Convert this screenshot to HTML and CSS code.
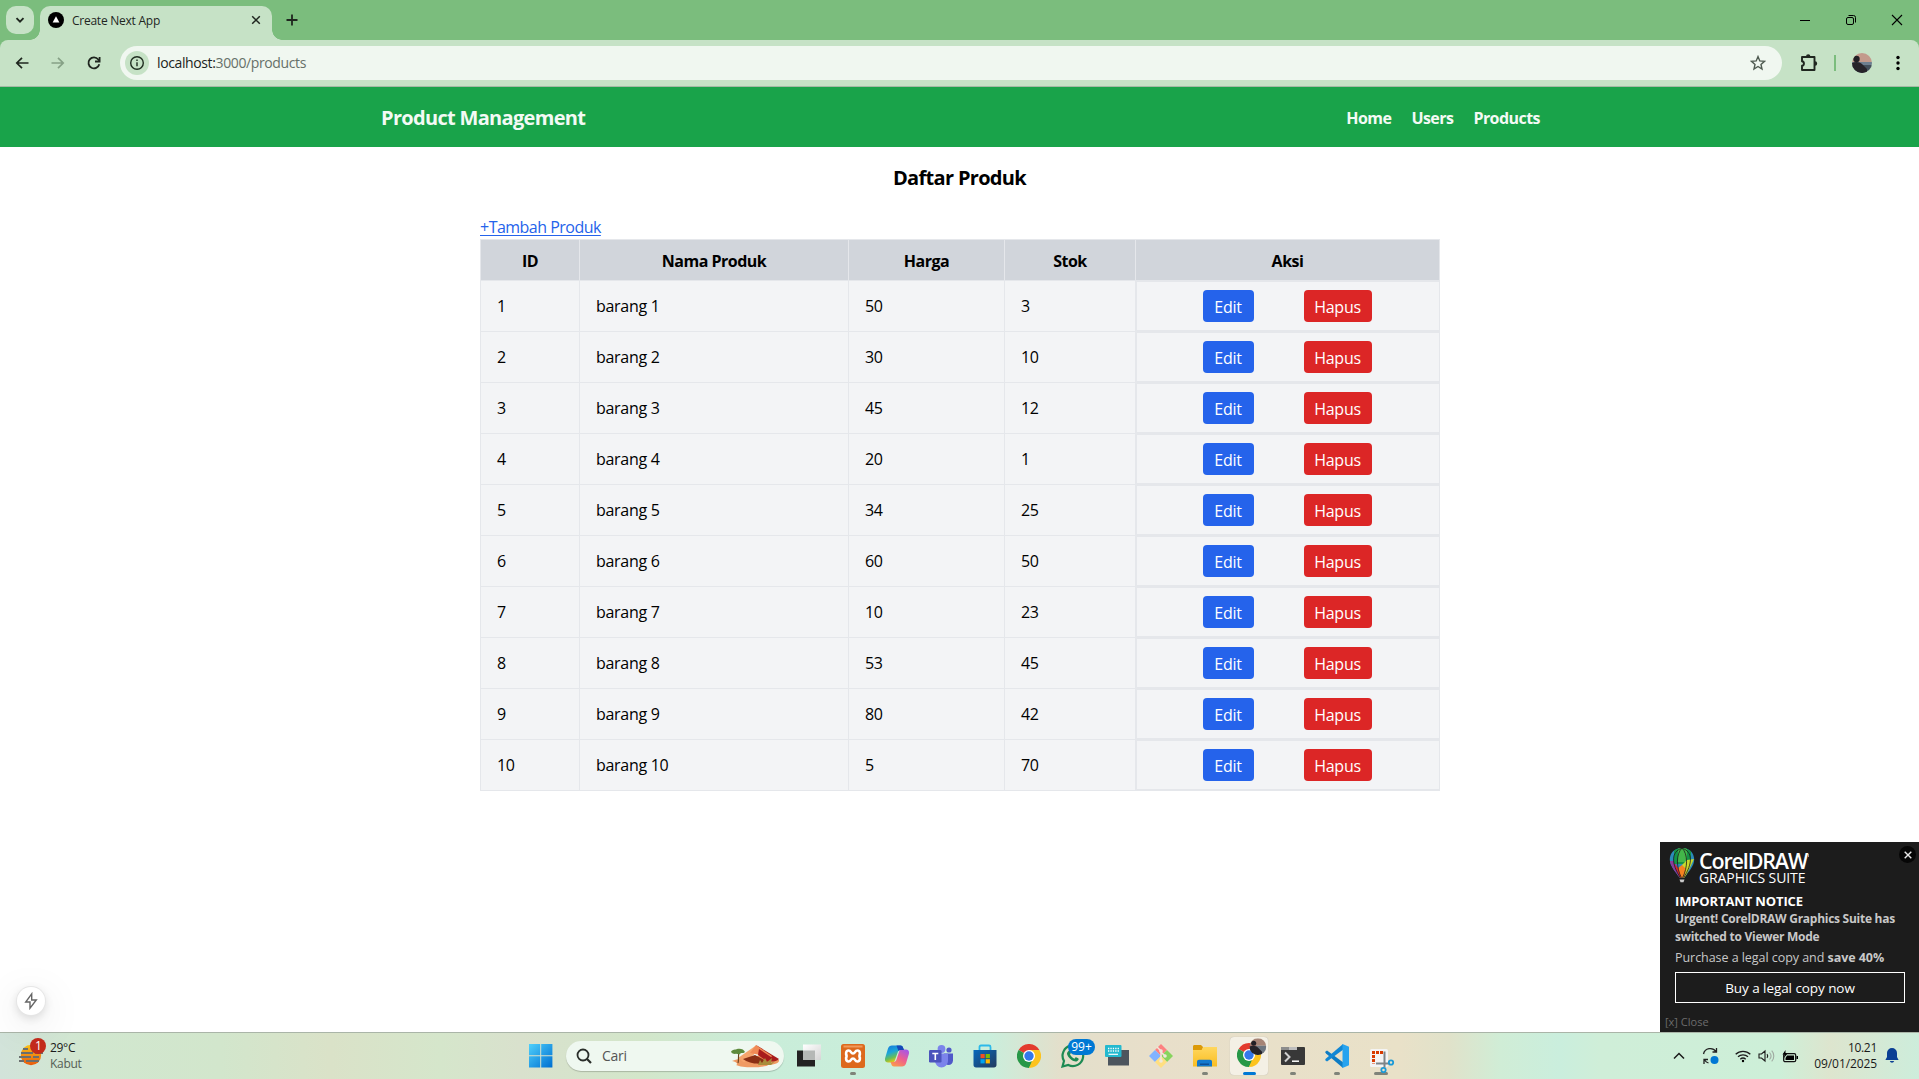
FILE: index.html
```html
<!DOCTYPE html>
<html lang="id">
<head>
<meta charset="utf-8">
<title>Create Next App</title>
<link rel="stylesheet" href="styles.css">
</head>
<body>
<header class="tabstrip">
  <button class="tabsearch"><svg width="12" height="12" viewBox="0 0 12 12"><path d="M2.500 4.200 6 7.700l3.500-3.500" fill="none" stroke="#1f261f" stroke-width="1.900"/></svg></button>
  <div class="tab">
    <svg class="favicon" width="16" height="16" viewBox="0 0 16 16"><circle cx="8" cy="8" r="8"/><path d="M8 4.200 11.400 10.600H4.600z" fill="#fff"/></svg>
    <span class="tabtitle">Create Next App</span>
    <svg width="10" height="10" viewBox="0 0 10 10"><path d="M1.200 1.200l7.600 7.600M8.800 1.200 1.200 8.800" stroke="#1f261f" stroke-width="1.500"/></svg>
  </div>
  <svg class="plus" width="12" height="12" viewBox="0 0 12 12"><path d="M6 .5v11M.5 6h11" stroke="#1f261f" stroke-width="1.800"/></svg>
  <div class="winbtns">
    <svg width="12" height="12" viewBox="0 0 12 12"><path d="M1 6.500h10" stroke="#000"/></svg>
    <svg width="12" height="12" viewBox="0 0 12 12" fill="none" stroke="#000"><rect x="1.500" y="3.500" width="7" height="7" rx="1.500"/><path d="M3.500 1.500h5a2 2 0 0 1 2 2v5"/></svg>
    <svg width="12" height="12" viewBox="0 0 12 12"><path d="M1 1l10 10M11 1 1 11" stroke="#000" stroke-width="1.100"/></svg>
  </div>
</header>
<div class="toolbar">
  <svg class="nv" width="16" height="16" viewBox="0 0 16 16" fill="none" stroke="#1f261f" stroke-width="1.700"><path d="M14.500 8H3M8 2.800 2.800 8 8 13.200"/></svg>
  <svg class="nv" width="16" height="16" viewBox="0 0 16 16" fill="none" stroke="#86a186" stroke-width="1.700"><path d="M1.500 8h12M8 2.800 13.200 8 8 13.200"/></svg>
  <svg class="nv" width="16" height="16" viewBox="0 0 16 16" fill="none" stroke="#1f261f" stroke-width="1.800"><path d="M13.300 9.300A5.500 5.500 0 1 1 12.300 4.500L13.500 6"/><path d="M13.600 2v4.500H9"/></svg>
  <div class="omnibox">
    <span class="info"><svg width="16" height="16" viewBox="0 0 16 16" fill="none" stroke="#1f2d20" stroke-width="1.400"><circle cx="8" cy="8" r="6.300"/><path d="M8 7.200v4M8 4.500v1.600"/></svg></span>
    <span class="url"><b>localhost:</b>3000/products</span>
    <svg width="16" height="16" viewBox="0 0 16 16" fill="none" stroke="#4e5a50" stroke-width="1.400"><path d="M8 1.600 9.800 5.900l4.700.4-3.500 3.100 1 4.600L8 11.500 4 14l1-4.600L1.500 6.300l4.700-.4z"/></svg>
  </div>
  <svg class="ext" width="18" height="20" viewBox="0 0 18 20"><path d="M2 4h12.500v13H2v-4.200c2.600-.4 2.600-4.200 0-4.600z" fill="none" stroke="#1f261f" stroke-width="1.900" stroke-linejoin="round"/><path d="M6 3.500a2.200 2.200 0 0 1 4.400 0zM15 8.300a2.200 2.200 0 0 1 0 4.400z" fill="#1f261f"/></svg>
  <i class="sep"></i>
  <svg class="avatar" width="20" height="20" viewBox="0 0 20 20"><defs><clipPath id="av"><circle cx="10" cy="10" r="10"/></clipPath></defs><g clip-path="url(#av)"><path fill="#c39a8c" d="M0 0h20v9H0z"/><path fill="#6e7f90" d="M0 9h20v3H0z"/><path fill="#44505c" d="M0 12h20v8H0z"/><circle cx="4.500" cy="6" r="3.200" fill="#211f25"/><path d="M0 10c4-2 8-1 10 1l5 5v4H0z" fill="#262329"/></g></svg>
  <svg class="dots" width="4" height="16" viewBox="0 0 4 16"><circle cx="2" cy="2.500" r="1.700"/><circle cx="2" cy="8" r="1.700"/><circle cx="2" cy="13.500" r="1.700"/></svg>
</div>
<main class="page">
  <nav class="navbar">
    <span class="brand">Product Management</span>
    <div class="links"><a>Home</a><a>Users</a><a>Products</a></div>
  </nav>
  <h1>Daftar Produk</h1>
  <section class="list">
    <a class="add">+Tambah Produk</a>
    <table>
      <colgroup><col class="c1"><col class="c2"><col class="c3"><col class="c4"><col class="c5"></colgroup>
      <thead><tr><th>ID</th><th>Nama Produk</th><th>Harga</th><th>Stok</th><th>Aksi</th></tr></thead>
      <tbody>
      <tr><td>1</td><td>barang 1</td><td>50</td><td>3</td><td class="act"><div><button class="edit">Edit</button><button class="del">Hapus</button></div></td></tr>
      <tr><td>2</td><td>barang 2</td><td>30</td><td>10</td><td class="act"><div><button class="edit">Edit</button><button class="del">Hapus</button></div></td></tr>
      <tr><td>3</td><td>barang 3</td><td>45</td><td>12</td><td class="act"><div><button class="edit">Edit</button><button class="del">Hapus</button></div></td></tr>
      <tr><td>4</td><td>barang 4</td><td>20</td><td>1</td><td class="act"><div><button class="edit">Edit</button><button class="del">Hapus</button></div></td></tr>
      <tr><td>5</td><td>barang 5</td><td>34</td><td>25</td><td class="act"><div><button class="edit">Edit</button><button class="del">Hapus</button></div></td></tr>
      <tr><td>6</td><td>barang 6</td><td>60</td><td>50</td><td class="act"><div><button class="edit">Edit</button><button class="del">Hapus</button></div></td></tr>
      <tr><td>7</td><td>barang 7</td><td>10</td><td>23</td><td class="act"><div><button class="edit">Edit</button><button class="del">Hapus</button></div></td></tr>
      <tr><td>8</td><td>barang 8</td><td>53</td><td>45</td><td class="act"><div><button class="edit">Edit</button><button class="del">Hapus</button></div></td></tr>
      <tr><td>9</td><td>barang 9</td><td>80</td><td>42</td><td class="act"><div><button class="edit">Edit</button><button class="del">Hapus</button></div></td></tr>
      <tr><td>10</td><td>barang 10</td><td>5</td><td>70</td><td class="act"><div><button class="edit">Edit</button><button class="del">Hapus</button></div></td></tr>
      </tbody>
    </table>
  </section>
  <div class="devtool"><svg width="16" height="18" viewBox="0 0 16 18"><path d="M8.700 1.800 2.700 10H7v6.200L13.300 8H8.700z" fill="none" stroke="#666" stroke-width="1.400"/></svg></div>
  <aside class="popup">
    <div class="corel">
      <svg width="26" height="36" viewBox="0 0 26 36"><defs><clipPath id="bal"><path d="M13 0C5.500 0 .8 5 .8 11.500.8 18 6 23 10.500 29.500h5C20 23 25.200 18 25.200 11.500 25.200 5 20.500 0 13 0z"/></clipPath></defs><g clip-path="url(#bal)"><path fill="#2b8bb8" d="M0 0h26v30H0z"/><path fill="#8a3b9d" d="M0 13h6l6 17H8z"/><path fill="#159447" d="M5 0h17v16H5z"/><path fill="#43b649" d="M9 0h9v14H9z"/><path fill="#c9d92c" d="M13 17l5-5 7-1-9 19h-2z"/><path fill="#f58220" d="M9 20l4-3 4 4-2 9h-4z"/><path fill="#e12726" d="M4.500 15 9 20l3 10h-1z"/><path d="M13 0C2 4 2 15 11.500 30M13 0c11 4 11 15 1.500 30M13 0C7 6 7 19 12.500 30M13 0c6 6 6 19 .5 30" fill="none" stroke="#1c1c1c" stroke-width=".8"/></g><path d="M10.500 31.500h5l-1 2.800h-3z" fill="#c9c9c9"/></svg>
      <div class="wordmark"><div class="w1">CorelDRAW<i></i></div><div class="w2">GRAPHICS SUITE</div></div>
    </div>
    <span class="x"><svg width="8" height="8" viewBox="0 0 8 8"><path d="M.7.7l6.600 6.600M7.300.7.7 7.300" stroke="#e8e8e8" stroke-width="1.400"/></svg></span>
    <div class="notice">IMPORTANT NOTICE</div>
    <div class="urgent">Urgent! CorelDRAW Graphics Suite has<br>switched to Viewer Mode</div>
    <div class="purchase">Purchase a legal copy and <b>save 40%</b></div>
    <div class="buy"><span>Buy a legal copy now</span></div>
    <div class="close">[x] Close</div>
  </aside>
</main>
<footer class="taskbar">
  <div class="weather">
    <svg width="28" height="28" viewBox="0 0 28 28"><defs><linearGradient id="sun" x2="0" y2="1"><stop stop-color="#fcc419"/><stop offset="1" stop-color="#e8590c"/></linearGradient></defs><circle cx="12" cy="17" r="10.200" fill="url(#sun)"/><path d="M4 11h5M2 15h12M16 15h8M0 19h12M14 19h6M0 23h5M7 23h13" stroke="#6b6f70" stroke-width="1.800"/><circle cx="19" cy="8" r="8" fill="#c42b1c"/><text x="16" y="12.200" font-size="12" fill="#fff">1</text></svg>
    <div><div class="deg">29°C</div><div class="cond">Kabut</div></div>
  </div>
  <div class="apps">
    <span class="app"><svg width="24" height="24" viewBox="0 0 24 24"><defs><linearGradient id="win" gradientUnits="userSpaceOnUse" x1="0" y1="0" x2="23" y2="23"><stop stop-color="#4fd0fb"/><stop offset="1" stop-color="#0070d2"/></linearGradient></defs><path fill="url(#win)" d="M0 0h11.200v11.200H0zM12.200 0h11.200v11.200H12.200zM0 12.200h11.200v11.200H0zM12.200 12.200h11.200v11.200H12.200z"/></svg></span>
    <div class="search">
      <svg width="16" height="16" viewBox="0 0 16 16" fill="none" stroke="#2a2e2a" stroke-width="1.800"><circle cx="7" cy="7" r="5.500"/><path d="M10.800 10.800 15 15" stroke-width="2.200"/></svg>
      <span>Cari</span>
      <svg width="50" height="25" viewBox="0 0 50 25"><path d="M2 17c8-3 30-6 47-1 1 4-8 5-11 5 0 2-24 4-32 0 3-1 0-3-4-4z" fill="#ef9a63"/><path d="M8 14 26 1.500l-2 9-10 8z" fill="#f6a46c"/><path d="M26 1 49 15c-3 3-8 3-12 2z" fill="#a81c1c"/><path d="M26 1 20 9l10 2-6 2 14 5 4-6z" fill="#f08a55"/><path d="M29 5 44 15l-6 3-10-7z" fill="#a81c1c"/><path d="M13 15l12-4 13 7c-7 3-19 2-25-3z" fill="#8a2f14"/><path d="M8 19c1-4 0-7 1-11" stroke="#6b4420" stroke-width="1.200" fill="none"/><path d="M1 8c1-3 5-2 6-3 3-1 7 0 8 3-2 2-4 0-5 2-2 1-3-1-5 0-2 0-3-1-4-2z" fill="#5e8a3c"/><path d="M28 21l2-5 2 3 3-5 2 4 5-4-1 5 4-2-4 4z" fill="#a88d3c"/></svg>
    </div>
    <span class="app"><svg width="24" height="24" viewBox="0 0 24 24"><defs><linearGradient id="tv" x2="1" y2="1"><stop stop-color="#fff"/><stop offset="1" stop-color="#d5d5d5"/></linearGradient></defs><path fill="#222" d="M0 6.500h18v16H0z"/><path fill="url(#tv)" d="M6 .5h18v15.500H6z"/><path fill="#b5b8b6" d="M6 6.500h12v9.500H6z"/></svg></span>
    <span class="app run"><svg width="24" height="24" viewBox="0 0 24 24"><rect width="24" height="24" rx="2.500" fill="#dd691d"/><path fill="#f09a5b" d="M2.500 1.500h19v2h-19z"/><path d="M7.500 6.500c3 0 2 3 4.500 3s1.500-3 4.500-3 3 5 1 5.500c2 .5 2 5.500-1 5.500s-2-3-4.500-3-1.500 3-4.500 3-3-5-1-5.500c-2-.5-2-5.500 1-5.500z" fill="none" stroke="#fff" stroke-width="2.600"/></svg></span>
    <span class="app"><svg width="24" height="24" viewBox="0 0 24 24"><defs><linearGradient id="co1" x2=".4" y2="1"><stop stop-color="#1676dc"/><stop offset=".45" stop-color="#1ba6d8"/><stop offset=".75" stop-color="#6abf55"/><stop offset="1" stop-color="#f2c80f"/></linearGradient><linearGradient id="co2" x1=".8" x2=".2" y2="1"><stop stop-color="#a557e8"/><stop offset=".5" stop-color="#ef5f8e"/><stop offset="1" stop-color="#fb9a4b"/></linearGradient></defs><path d="M7 1.500h8.500c1.700 0 2.300 1.200 2.700 2.500L19 6h-3c-2 0-3 1-3.500 3L10 16c-.6 2-1.500 2.500-3 2.500H3c-3 0-3.500-2.500-2.700-5L3 4.500c.7-2 2-3 4-3z" fill="url(#co1)"/><path d="M17 22.500H9c-1.700 0-2.300-1.200-2.700-2.500L5.500 18h2.700c2 0 3-1 3.500-3L14 8c.6-2 1.500-2.500 3-2.500h4c3 0 3.500 2.500 2.700 5L21 19.500c-.7 2-2 3-4 3z" fill="url(#co2)"/><path d="M11.500 1.500h4c1.700 0 2.300 1.200 2.700 2.500L19 6h-3c-1 0-2 .3-2.600 1z" fill="#1748b8"/></svg></span>
    <span class="app"><svg width="24" height="24" viewBox="0 0 24 24"><circle cx="20" cy="6" r="2.600" fill="#5059c9"/><path d="M15 9.500h9v7a4.500 4.500 0 0 1-9 0z" fill="#5059c9"/><circle cx="12.500" cy="5" r="3.900" fill="#7b83eb"/><path d="M6 9.500h13v7.500a6.500 6.500 0 0 1-13 0z" fill="#7b83eb"/><rect y="6" width="12.500" height="12.500" rx="1.200" fill="#4b53bc"/><path d="M3.300 9.500h6M6.300 9.500v6.500" stroke="#fff" stroke-width="1.600"/></svg></span>
    <span class="app"><svg width="24" height="24" viewBox="0 0 24 24"><defs><linearGradient id="st" x2="1" y2="1"><stop stop-color="#0669bc"/><stop offset="1" stop-color="#243a5e"/></linearGradient></defs><path d="M6.500 7V3c0-1 .5-1.500 1.500-1.500h8c1 0 1.500.5 1.500 1.500v4" fill="none" stroke="#2cb9ea" stroke-width="1.800"/><path d="M.5 6h23v15c0 1.500-1 2.500-2.500 2.500H3c-1.500 0-2.500-1-2.500-2.500z" fill="url(#st)"/><path fill="#f25022" d="M7.500 10h4.200v4.200H7.500z"/><path fill="#7fba00" d="M12.700 10h4.200v4.200h-4.200z"/><path fill="#00a4ef" d="M7.500 15.200h4.200v4.200H7.500z"/><path fill="#ffb900" d="M12.700 15.200h4.200v4.200h-4.200z"/></svg></span>
    <span class="app"><svg width="24" height="24" viewBox="0 0 24 24"><path d="M12 12 1.600 6A12 12 0 0 1 22.400 6z" fill="#e33b2e"/><path d="M12 12 1.600 6A12 12 0 0 0 12 24l5.200-9z" fill="#279847"/><path d="M12 12h5l-5 12A12 12 0 0 0 22.400 6H12z" fill="#fcc31e"/><circle cx="12" cy="12" r="6" fill="#fff"/><circle cx="12" cy="12" r="4.700" fill="#3478ea"/></svg></span>
    <span class="app wa"><svg width="24" height="24" viewBox="0 0 24 24"><path d="M1.500 22.500 3 17A10.300 10.300 0 1 1 7.300 21z" fill="none" stroke="#1d8a53" stroke-width="2.200"/><path d="M7 7.500c1-1.500 2-1 2.500.5s0 1.700-.5 2.500c1 2 2.500 3.300 4.500 4.200 1-1 1.200-1.600 2-1.200 2 .8 2.500 1 2 2.200-1 2-3 2-5 1.300-3-1-6.500-5-6.500-7.500 0-.7.500-1.500 1-2z" fill="#1d8a53"/></svg><em>99+</em></span>
    <span class="app"><svg width="24" height="24" viewBox="0 0 24 24"><path fill="#4d555e" d="M3 6h21v15.500H3z"/><rect y="1" width="16.500" height="12" rx="1" fill="#24b9cf"/><path d="M3 4.500h11M3 7h11" stroke="#fff" stroke-width="1.300" stroke-dasharray="1.300 1.100"/><path d="M3.500 10.300h9.500" stroke="#fff" stroke-width="1.200"/></svg></span>
    <span class="app"><svg width="24" height="24" viewBox="0 0 24 24"><path fill="#fd8080" d="M12 0l6 6-6 6-6-6z"/><path fill="#80b3ff" d="M6 6l6 6-6 6-6-6z"/><path fill="#87d45e" d="M18 6l6 6-6 6-6-6z"/><path fill="#ffdf80" d="M12 12l6 6-6 6-6-6z"/><path d="M8 3l4 4v10M12 8l4 4" stroke="#efe8dc" stroke-width="1.500" fill="none"/><circle cx="12" cy="7" r="1.800" fill="#efe8dc"/><circle cx="16" cy="12" r="1.800" fill="#efe8dc"/><circle cx="12" cy="17" r="1.800" fill="#efe8dc"/></svg></span>
    <span class="app run"><svg width="24" height="24" viewBox="0 0 24 24"><defs><linearGradient id="fo" x2="0" y2="1"><stop stop-color="#ffd75e"/><stop offset="1" stop-color="#f9bd22"/></linearGradient></defs><path d="M0 2.500C0 1.700.6 1 1.500 1H8l2 2-1 4H0z" fill="#dc9a08"/><path d="M0 6h8.500l2-3H24v19.500H0z" fill="url(#fo)"/><path d="M4 22.500v-4.500c0-1.500.8-2.300 2-2.300h11c1.200 0 2 .8 2 2.300v4.500z" fill="#1279ce"/><path d="M7 19.500h9v1.500H7z" fill="#0b4f97"/></svg></span>
    <span class="app active"><svg width="30" height="30" viewBox="0 -5 30 30"><path d="M12 12 1.600 6A12 12 0 0 1 22.400 6z" fill="#e33b2e"/><path d="M12 12 1.600 6A12 12 0 0 0 12 24l5.200-9z" fill="#279847"/><path d="M12 12h5l-5 12A12 12 0 0 0 22.400 6H12z" fill="#fcc31e"/><circle cx="12" cy="12" r="6" fill="#fff"/><circle cx="12" cy="12" r="4.700" fill="#3478ea"/><g transform="translate(12.500 -4.800) scale(.84)" clip-path="url(#av)"><path fill="#a68476" d="M0 0h20v9H0z"/><path fill="#6e7680" d="M0 9h20v11H0z"/><circle cx="5" cy="6" r="3" fill="#211f25"/><path d="M0 10c4-2 8-1 10 1l5 5v4H0z" fill="#262329"/></g></svg></span>
    <span class="app run"><svg width="24" height="24" viewBox="0 0 24 24"><rect y="3" width="24" height="18" rx="1" fill="#383838"/><path fill="#8d8d8d" d="M0 3h16v3H0z"/><path fill="#bdbdbd" d="M8 3h8v3H8z"/><path d="M4 8.500l4.500 4.500L4 17.500" stroke="#d0d0d0" stroke-width="2" fill="none"/><path d="M11 17.200h7" stroke="#fff" stroke-width="1.500"/></svg></span>
    <span class="app run"><svg width="24" height="24" viewBox="0 0 24 24"><path d="M0 8 2 6.500l16 11.700V24L1 9.500z" fill="#0e7cc4"/><path d="M0 16l2 1.500 16-11.700V0L1 14.500z" fill="#1287d4"/><path d="M17.500 0 24 2.800v18.400L17.500 24z" fill="#27a3ef"/></svg></span>
    <span class="app snip"><svg width="26" height="26" viewBox="0 0 26 26"><rect x="1" y="2" width="18" height="18" rx="1.500" fill="#f4f4f4"/><path d="M14 5.500H4.500v11" fill="none" stroke="#d83b01" stroke-width="3" stroke-dasharray="3 1"/><path d="M15.500 4.500v16M7 16.500h14" stroke="#7d8589" stroke-width="2"/><circle cx="22" cy="15.500" r="2.200" fill="none" stroke="#1b9ad8" stroke-width="1.800"/><circle cx="14.500" cy="23" r="2.200" fill="none" stroke="#1b9ad8" stroke-width="1.800"/></svg></span>
  </div>
  <div class="tray">
    <svg class="chev" width="12" height="8" viewBox="0 0 12 8"><path d="M1 6.500 6 1.500l5 5" fill="none" stroke="#1a1a1a" stroke-width="1.500"/></svg>
    <svg class="sync" width="18" height="18" viewBox="0 0 18 18"><path d="M1.500 7A7 7 0 0 1 14 4.500M14.500 1v4h-4M2 17v-4.500h4M2.500 13c1 1.500 2.500 2.500 4 3" fill="none" stroke="#222" stroke-width="1.300"/><circle cx="12.500" cy="13" r="4" fill="#0078d4"/></svg>
    <svg class="wifi" width="16" height="14" viewBox="0 0 16 14"><g fill="none" stroke="#1a1a1a" stroke-width="1.300"><path d="M.7 5.300a10.500 10.500 0 0 1 14.600 0M3 7.800a7.200 7.200 0 0 1 10 0M5.300 10.200a4 4 0 0 1 5.400 0"/></g><circle cx="8" cy="12" r="1.200"/></svg>
    <svg class="vol" width="17" height="14" viewBox="0 0 17 14" fill="none" stroke="#1a1a1a" stroke-width="1.100"><path d="M1 5h2.500L7 2v10L3.500 9H1zM9 5.200c.8 1 .8 2.600 0 3.600"/><path d="M11.500 3.500c1.800 2 1.800 5 0 7M13.700 1.700c2.800 3 2.800 7.600 0 10.600" stroke="#a0aaa2"/></svg>
    <svg class="bat" width="17" height="13" viewBox="0 0 17 13"><rect x="1.700" y="3.700" width="12" height="8" rx="1.500" fill="none" stroke="#111" stroke-width="1.300"/><path d="M5 5.500h7v4.500H3.500V8z"/><path d="M14.500 6h1.500v3h-1.500zM3.500 0 .5 4.500h2L2 8l3.500-4.500h-2z"/></svg>
    <div class="clock"><div class="hm">10.21</div><div class="dmy">09/01/2025</div></div>
    <svg class="bell" width="14" height="16" viewBox="0 0 14 16"><path d="M7 0a5 5 0 0 1 5 5v4l1.600 3H.4L2 9V5a5 5 0 0 1 5-5zM4.800 13h4.400a2.300 2.300 0 0 1-4.400 0z" fill="#0a3f94"/></svg>
  </div>
</footer>
</body>
</html>
```
FILE: styles.css
```css
* { box-sizing: border-box; }
body { margin: 0; height: 1079px; overflow: hidden; display: flex; flex-direction: column; background: #7bbd7d; color: #000; font: 16px/24px "Open Sans", "Noto Sans", sans-serif; }
svg { display: block; flex: none; }
button { border: 0; padding: 0; font: inherit; }

.tabstrip { height: 40px; flex: none; background: #7bbd7d; display: flex; align-items: center; padding-left: 6px; }
.tabsearch { width: 28px; height: 28px; border-radius: 10px; background: #c6e2c6; display: grid; place-items: center; }
.tab { position: relative; align-self: flex-end; margin-left: 6px; width: 232px; height: 34px; border-radius: 10px 10px 0 0; background: #c6e2c6; display: flex; align-items: center; padding: 0 11px 6px 8px; }
.tab::before, .tab::after { content: ""; position: absolute; bottom: 0; width: 10px; height: 10px; }
.tab::before { left: -10px; background: radial-gradient(circle at 0 0, transparent 9.5px, #c6e2c6 10px); }
.tab::after { right: -10px; background: radial-gradient(circle at 100% 0, transparent 9.5px, #c6e2c6 10px); }
.tabtitle { flex: 1; margin-left: 8px; padding-top: 2px; font-size: 12px; letter-spacing: -.25px; color: #1f261f; line-height: 16px; }
.plus { margin-left: 14px; }
.winbtns { margin-left: auto; margin-right: 16px; display: flex; gap: 34px; }

.toolbar { height: 47px; flex: none; background: #c6e2c6; border-bottom: 1px solid #a5baa5; border-radius: 8px 8px 0 0; display: flex; align-items: center; padding-left: 14px; }
.nv { margin-right: 20px; }
.omnibox { width: 1662px; height: 34px; margin-left: -2px; border-radius: 17px; background: #f0f7f0; display: flex; align-items: center; padding: 0 16px 0 5px; }
.info { width: 24px; height: 24px; border-radius: 50%; background: #c6e2c6; display: grid; place-items: center; }
.url { flex: 1; margin-left: 8px; font-size: 14px; letter-spacing: -.38px; color: #667069; }
.url b { font-weight: 400; color: #1b241d; }
.ext { margin-left: 18px; }
.sep { width: 2px; height: 16px; margin-left: 16px; background: #7bbd7d; }
.avatar { margin-left: 16px; }
.dots { margin-left: 24px; }

.page { position: relative; flex: 1; min-height: 0; background: #fff; }
.navbar { height: 60px; background: #19a34a; color: #f3faf5; display: flex; align-items: center; justify-content: space-between; padding: 2px 379px 0 381px; font-weight: 700; }
.brand { font-size: 20px; letter-spacing: -.68px; }
.links { display: flex; gap: 20px; letter-spacing: -.55px; margin-top: -1px; }
h1 { margin: 17px 0 0; text-align: center; font-size: 20px; line-height: 28px; letter-spacing: -.68px; }
.list { width: 960px; margin: 23px 0 0 480px; }
.add { display: block; height: 24px; line-height: 25px; color: #2563eb; text-decoration: underline; text-underline-offset: 2px; letter-spacing: -.52px; }
table { width: 960px; table-layout: fixed; border-collapse: separate; border-spacing: 0; border: solid #e5e7eb; border-width: 1px 0 0 1px; }
.c1 { width: 99px; } .c2 { width: 269px; } .c3 { width: 156px; } .c4 { width: 131px; } .c5 { width: 304px; }
th, td { border: solid #e5e7eb; border-width: 0 1px 1px 0; letter-spacing: -.3px; }
th { height: 41px; padding: 1px 0 0; background: #d1d5db; font-weight: 700; letter-spacing: -.5px; }
td { height: 51px; padding: 0 16px; background: #f3f4f6; }
td.act { padding: 0; }
.act div { height: 50px; border: solid #e5e7eb; border-width: 1px 0 1px 1px; display: flex; align-items: center; justify-content: center; gap: 50px; padding-right: 2px; }
.edit, .del { height: 32px; padding-top: 1px; border-radius: 4px; color: #fff; letter-spacing: -.25px; }
.edit { width: 51px; background: #2563eb; }
.del { width: 68px; background: #dc2626; }

.devtool { position: absolute; left: 17px; top: 900px; width: 28px; height: 28px; border-radius: 50%; background: #fff; display: grid; place-items: center; box-shadow: 0 0 0 1px #e6e6e6, 0 3px 10px rgba(0,0,0,.14), 0 10px 40px rgba(0,0,0,.13); }
.popup { position: absolute; right: 0; bottom: 0; width: 259px; height: 190px; background: #1c1c1c; color: #c8c8c8; padding-left: 15px; font-size: 12px; }
.corel { display: flex; margin-left: -6px; padding-top: 6px; height: 48px; }
.wordmark { color: #fff; margin-left: 4px; white-space: nowrap; padding-top: 3px; }
.w1 { font: 600 21.500px/20px "Open Sans", sans-serif; letter-spacing: -1.150px; }
.w1 i { display: inline-block; width: 1px; height: 3px; margin-left: 1px; background: #999; vertical-align: 12px; }
.w2 { font: 14px/14px "Open Sans", sans-serif; letter-spacing: -.1px; }
.x { position: absolute; right: 3px; top: 4px; width: 17px; height: 17px; border-radius: 50%; background: #060606; display: grid; place-items: center; }
.notice { font-size: 13px; line-height: 20px; font-weight: 700; color: #fff; letter-spacing: -.13px; margin-top: 1px; }
.urgent { line-height: 18px; margin-top: -1px; font-weight: 700; letter-spacing: -.27px; white-space: nowrap; }
.purchase { line-height: 18px; margin-top: 3px; white-space: nowrap; font-size: 12.500px; letter-spacing: -.05px; }
.buy { margin-top: 5px; width: 230px; height: 31px; border: 1px solid #fff; color: #fff; font-size: 13.500px; letter-spacing: -.07px; display: grid; place-items: center; }
.close { margin: 10px 0 0 -10px; line-height: 18px; font-size: 11px; color: #6c6c6c; }

.taskbar { height: 47px; flex: none; border-top: 1px solid #aab5a8; display: flex; background: linear-gradient(90deg, #d2e3da 0, #d1e7cf 90px, #d2e6cc 220px, #dae2c8 330px, #d5e6cb 440px, #d9e1cd 520px, #d3e6ca 640px, #c9edd9 760px, #caeedc 990px, #e3dfcb 1060px, #e8dfca 1150px, #e9e1c8 1400px, #e0e2ca 1450px, #d0edd6 1500px, #caeedd 1560px, #cfeed8 1600px, #cdefd8 1780px, #dde5ce 1830px, #cdeddb 1919px); }
.weather { width: 519px; padding-left: 19px; display: flex; padding-top: 5px; }
.weather text { font-family: "Open Sans", sans-serif; }
.weather > div { margin: 2px 0 0 3px; font-size: 12px; line-height: 16px; letter-spacing: -.3px; color: #1a1a1a; }
.weather .cond { color: #555e55; }
.apps { display: flex; align-items: center; }
.app { position: relative; width: 44px; height: 46px; display: grid; place-items: center; }
.search { width: 218px; height: 30px; margin: 0 3px; border-radius: 15px; background: #eff8f0; box-shadow: 0 1px 1px rgba(0,0,0,.2); display: flex; align-items: center; padding: 0 4px 0 10px; font-size: 14px; color: #555; letter-spacing: -.3px; }
.search span { margin-left: 10px; flex: 1; }
.run::after, .active::after, .snip::after { content: ""; position: absolute; bottom: 4px; left: 19px; width: 6px; height: 3px; border-radius: 2px; background: #7f8379; }
.active::before { content: ""; position: absolute; left: 3px; top: 4px; width: 38px; height: 38px; border-radius: 4px; background: #f4f0e5; box-shadow: 0 0 1px #aaa; }
.active::after { left: 16px; width: 13px; background: #0078d4; }
.active svg { position: relative; left: 3px; top: -3px; }
.wa em { position: absolute; left: 17px; top: 6px; width: 27px; height: 16px; border-radius: 8px; background: #0078d4; color: #fff; font: 12px/16px "Open Sans", sans-serif; text-align: center; z-index: 1; }
.snip svg { position: relative; top: 4px; left: 1px; z-index: 1; }
.snip::after { left: 15px; width: 14px; }
.tray { margin-left: auto; padding-right: 20px; display: flex; align-items: center; }
.sync { margin-left: 17px; } .wifi { margin-left: 15px; } .vol { margin-left: 7px; } .bat { margin-left: 7px; }
.clock { width: 78px; text-align: right; font-size: 12px; line-height: 16px; letter-spacing: -.1px; color: #1a1a1a; }
.hm { letter-spacing: -.3px; }
.bell { margin-left: 8px; }
```
